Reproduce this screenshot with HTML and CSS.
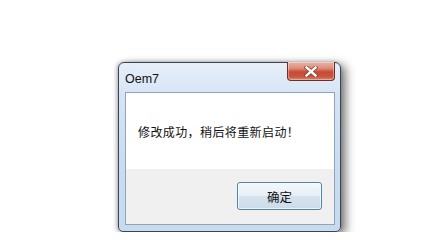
FILE: index.html
```html
<!DOCTYPE html>
<html>
<head>
<meta charset="utf-8">
<link rel="stylesheet" href="styles.css">
</head>
<body>
<div class="window">
  <div class="titlebar">
    <span class="title">Oem7</span>
    <div class="close"><svg width="14" height="11" viewBox="0 0 14 11"><path d="M2.5 1.5 L11.5 9.5 M11.5 1.5 L2.5 9.5" stroke="#7a3a2e" stroke-width="3.8" stroke-linecap="square"/><path d="M2.5 1.5 L11.5 9.5 M11.5 1.5 L2.5 9.5" stroke="#fff" stroke-width="2.4" stroke-linecap="square"/></svg></div>
  </div>
  <div class="client">
    <div class="message">修改成功，稍后将重新启动！</div>
    <div class="footer">
      <div class="button">确定</div>
    </div>
  </div>
</div>
</body>
</html>
```

FILE: styles.css
```css
html, body {
  margin: 0;
  padding: 0;
  background: #ffffff;
  width: 441px;
  height: 232px;
  overflow: hidden;
}
body {
  padding: 62px 0 0 118px;
  box-sizing: border-box;
}
.window {
  position: relative;
  width: 223px;
  height: 170px;
  box-sizing: border-box;
  border: 1px solid #3a4552;
  border-radius: 6px 6px 5px 5px;
  background: linear-gradient(180deg, #e6eff9 0%, #d5e4f5 20%, #c9dcf1 60%, #c6daf0 100%);
  box-shadow: 5px 3px 10px rgba(0,0,0,0.5), -1px 0 4px rgba(0,0,0,0.3);
  display: flex;
  flex-direction: column;
}
.titlebar {
  height: 29px;
  position: relative;
  display: flex;
  align-items: center;
  padding-left: 6px;
}
.title {
  font-family: "Liberation Sans", Arial, sans-serif;
  font-size: 12.5px;
  color: #111;
  margin-top: 2px;
}
.close {
  position: absolute;
  right: 5px;
  top: -1px;
  width: 48px;
  height: 19px;
  box-sizing: border-box;
  border: 1px solid #6a3028;
  border-top: none;
  border-radius: 0 0 4px 4px;
  background: linear-gradient(180deg, #e9b4a8 0%, #dc8c7a 35%, #c84a34 55%, #c9533d 80%, #da8670 100%);
  box-shadow: inset 0 0 0 1px rgba(255,255,255,0.35);
  display: flex;
  align-items: center;
  justify-content: center;
}
.client {
  margin: 0 5px 6px 6px;
  flex: 1;
  border: 1px solid #8fa3bb;
  background: #f0f0f0;
  display: flex;
  flex-direction: column;
}
.message {
  height: 76px;
  background: #ffffff;
  display: flex;
  align-items: center;
  padding-left: 12px;
  font-family: "Noto Sans CJK SC", sans-serif;
  font-size: 12px;
  letter-spacing: 0.4px;
  color: #111;
}
.footer {
  flex: 1;
  display: flex;
  align-items: center;
  justify-content: flex-end;
  padding-right: 12px;
  padding-bottom: 1px;
}
.button {
  width: 85px;
  height: 28px;
  box-sizing: border-box;
  border: 1px solid #4a86b4;
  border-radius: 3px;
  background: linear-gradient(180deg, #f4f8fb 0%, #e7eff6 48%, #d6e3ee 52%, #cddbe8 100%);
  box-shadow: inset 0 0 0 1px rgba(255,255,255,0.7);
  display: flex;
  align-items: center;
  justify-content: center;
  font-family: "Noto Sans CJK SC", sans-serif;
  font-size: 12.5px;
  color: #111;
}
```
